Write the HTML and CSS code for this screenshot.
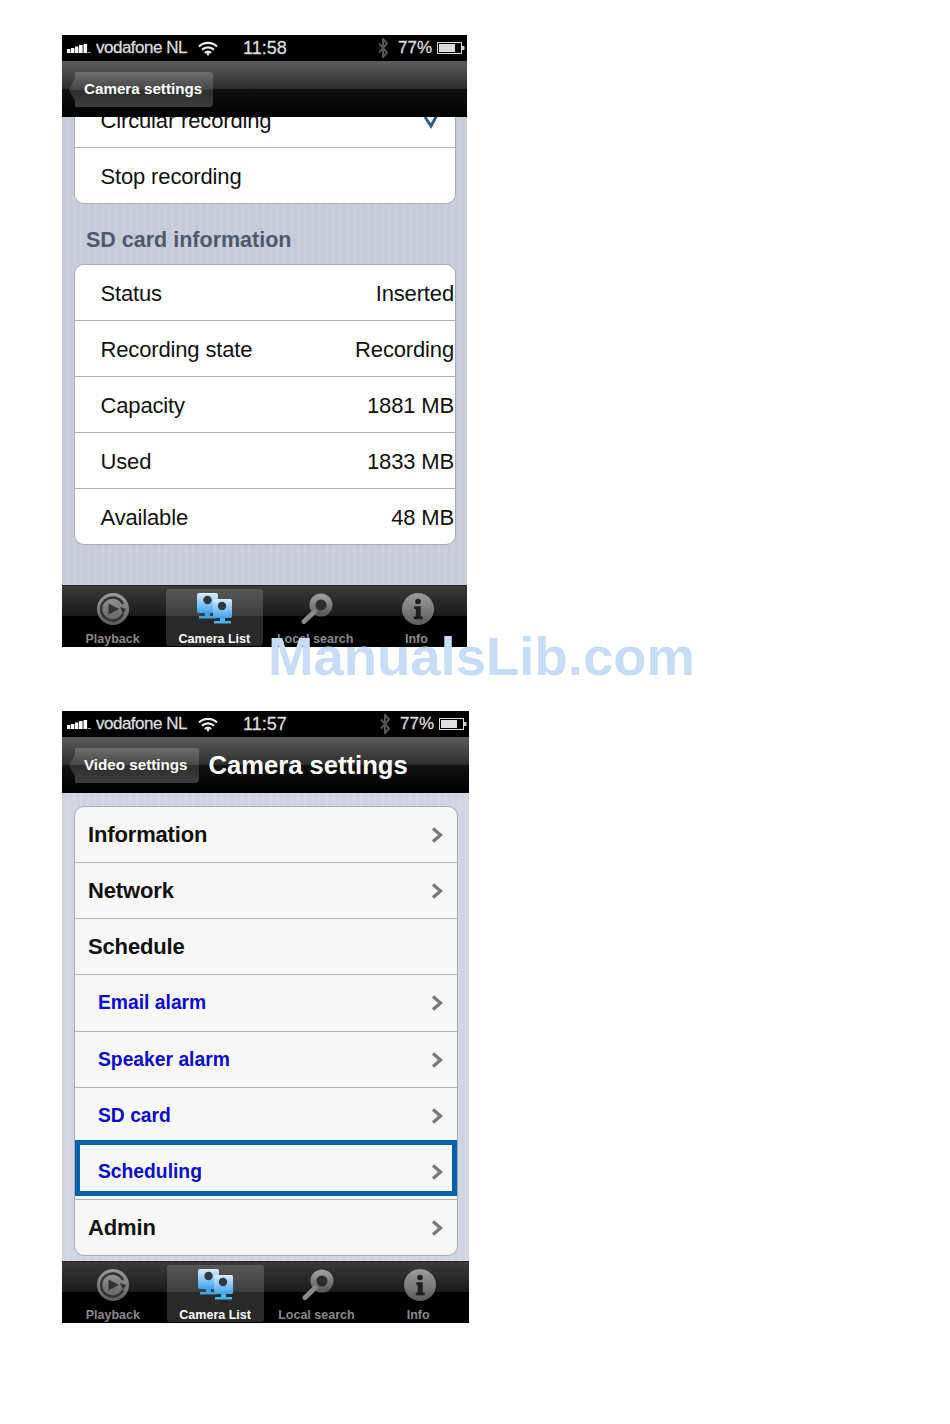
FILE: index.html
```html
<!DOCTYPE html>
<html lang="en">
<head>
  <meta charset="UTF-8" />
  <meta name="viewport" content="width=device-width, initial-scale=1.0" />
  <title>Camera settings</title>
  <link rel="stylesheet" href="styles.css">
</head>
<body>
  <!-- Shared icons -->
  <svg class="icon-defs" width="0" height="0" aria-hidden="true">
    <defs>
      <linearGradient id="greyFill" x1="0" y1="0" x2="0" y2="1">
        <stop offset="0" stop-color="#9c9c9c" />
        <stop offset="1" stop-color="#5c5c5c" />
      </linearGradient>
      <linearGradient id="blueFill" x1="0" y1="0" x2="0" y2="1">
        <stop offset="0" stop-color="#dcecfa" />
        <stop offset="1" stop-color="#3fa4ee" />
      </linearGradient>
    </defs>
    <symbol id="iconSignal" viewBox="0 0 25 10">
      <rect x="0" y="5" width="3.400" height="4" fill="#fff" />
      <rect x="4" y="4" width="3.400" height="5" fill="#fff" />
      <rect x="8" y="2.500" width="3.400" height="6.500" fill="#fff" />
      <rect x="12" y="1" width="3.600" height="8" fill="#fff" />
      <rect x="16.500" y="0" width="3.600" height="9" fill="#fff" />
      <rect x="21" y="8" width="3" height="1" fill="#999" />
    </symbol>
    <symbol id="iconWifi" viewBox="0 0 20 15">
      <path d="M1 5.500a13 13 0 0 1 18 0M4 8.800a8.600 8.600 0 0 1 12 0M7 12a4 4 0 0 1 6 0" fill="none" stroke="#eee" stroke-width="2.200" />
      <path d="M8.400 12.800L10 11.600l1.600 1.200L10 15z" fill="#eee" />
    </symbol>
    <symbol id="iconBluetooth" viewBox="0 0 10 20">
      <path d="M1 5.500l8 9-4 4.500V1l4 4.500-8 9" fill="none" stroke="#555" stroke-width="2" />
    </symbol>
    <symbol id="iconBattery" viewBox="0 0 28 12">
      <rect x="0.500" y="0.500" width="24" height="11" fill="none" stroke="#ddd" />
      <rect x="2" y="2" width="16" height="8" fill="#ddd" />
      <rect x="25" y="4" width="2.500" height="4" fill="#ccc" />
    </symbol>
    <symbol id="iconChevron" viewBox="0 0 12 16">
      <path d="M2 1.500L9.500 8L2 14.500" fill="none" stroke="#777" stroke-width="3.200" />
    </symbol>
    <symbol id="iconCheck" viewBox="0 0 16 16">
      <path d="M2 4l6 9 6-11" fill="none" stroke="#3a5a8c" stroke-width="3" />
    </symbol>
    <symbol id="iconPlayback" viewBox="0 0 32 32">
      <circle cx="16" cy="16" r="16" fill="url(#greyFill)" />
      <path d="M26 21a11.500 11.500 0 1 1 0-10" fill="none" stroke="#333" stroke-width="2.400" />
      <path d="M23 14l6 2-3 5z" fill="#333" />
      <path d="M11.500 10.500L22 16l-10.500 5.500z" fill="#333" />
    </symbol>
    <symbol id="iconCameras" viewBox="0 0 35 32">
      <rect x="0" y="0" width="21" height="20" rx="2" fill="url(#blueFill)" />
      <circle cx="10.500" cy="7" r="4.200" fill="#2d3a46" />
      <path d="M8 20h5v3h6v2.500H2V23h6z" fill="#3fa4ee" />
      <rect x="16" y="6" width="19" height="19" rx="1.500" fill="url(#blueFill)" />
      <circle cx="25" cy="13" r="4.200" fill="#2d3a46" />
      <path d="M23 25h5v3h6v2.500H17V28h6z" fill="#45b8ee" />
    </symbol>
    <symbol id="iconSearch" viewBox="0 0 32 31">
      <circle cx="20" cy="11.500" r="8.500" fill="#2b2b2b" stroke="url(#greyFill)" stroke-width="6" />
      <path d="M13 18.500L3 28" stroke="#8a8a8a" stroke-width="5" stroke-linecap="round" />
    </symbol>
    <symbol id="iconInfo" viewBox="0 0 30 30">
      <circle cx="15" cy="15" r="15" fill="url(#greyFill)" />
      <circle cx="15" cy="8" r="2.600" fill="#1d1d1d" />
      <path d="M11.500 12.500h6v9.500h2v2.500h-8.500V22h2v-7h-1.500z" fill="#1d1d1d" />
    </symbol>
  </svg>

  <!-- SD card screen -->
  <div class="phone phone-sd">
    <div class="status-bar">
      <svg class="signal"><use href="#iconSignal" /></svg>
      <span class="carrier">vodafone NL</span>
      <svg class="wifi"><use href="#iconWifi" /></svg>
      <span class="clock">11:58</span>
      <svg class="bluetooth"><use href="#iconBluetooth" /></svg>
      <span class="percent">77%</span>
      <svg class="battery"><use href="#iconBattery" /></svg>
    </div>
    <div class="nav-bar">
      <span class="back-button">Camera settings</span>
    </div>
    <div class="content">
      <div class="card card-clipped">
        <div class="row">
          <span>Circular recording</span>
          <svg class="check"><use href="#iconCheck" /></svg>
        </div>
        <div class="row"><span>Stop recording</span></div>
      </div>
      <h2 class="section-title">SD card information</h2>
      <div class="card">
        <div class="row"><span>Status</span><span class="value">Inserted</span></div>
        <div class="row"><span>Recording state</span><span class="value">Recording</span></div>
        <div class="row"><span>Capacity</span><span class="value">1881 MB</span></div>
        <div class="row"><span>Used</span><span class="value">1833 MB</span></div>
        <div class="row"><span>Available</span><span class="value">48 MB</span></div>
      </div>
    </div>
    <div class="tab-bar">
      <div class="tab"><svg class="tab-icon"><use href="#iconPlayback" /></svg><span>Playback</span></div>
      <div class="tab active"><svg class="tab-icon cameras"><use href="#iconCameras" /></svg><span>Camera List</span></div>
      <div class="tab"><svg class="tab-icon nudged"><use href="#iconSearch" /></svg><span>Local search</span></div>
      <div class="tab"><svg class="tab-icon nudged"><use href="#iconInfo" /></svg><span>Info</span></div>
    </div>
  </div>

  <!-- Camera settings screen -->
  <div class="phone phone-settings">
    <div class="status-bar">
      <svg class="signal"><use href="#iconSignal" /></svg>
      <span class="carrier">vodafone NL</span>
      <svg class="wifi"><use href="#iconWifi" /></svg>
      <span class="clock">11:57</span>
      <svg class="bluetooth"><use href="#iconBluetooth" /></svg>
      <span class="percent">77%</span>
      <svg class="battery"><use href="#iconBattery" /></svg>
    </div>
    <div class="nav-bar">
      <span class="back-button">Video settings</span>
      <h1 class="nav-title">Camera settings</h1>
    </div>
    <div class="content">
      <div class="card card-menu">
        <div class="row menu-row"><span>Information</span><svg class="chevron"><use href="#iconChevron" /></svg></div>
        <div class="row menu-row"><span>Network</span><svg class="chevron"><use href="#iconChevron" /></svg></div>
        <div class="row menu-row"><span>Schedule</span></div>
        <div class="row menu-row sub-row first-sub"><span>Email alarm</span><svg class="chevron"><use href="#iconChevron" /></svg></div>
        <div class="row menu-row sub-row"><span>Speaker alarm</span><svg class="chevron"><use href="#iconChevron" /></svg></div>
        <div class="row menu-row sub-row"><span>SD card</span><svg class="chevron"><use href="#iconChevron" /></svg></div>
        <div class="row menu-row sub-row marked"><span>Scheduling</span><svg class="chevron"><use href="#iconChevron" /></svg></div>
        <div class="row menu-row"><span>Admin</span><svg class="chevron"><use href="#iconChevron" /></svg></div>
      </div>
    </div>
    <div class="tab-bar">
      <div class="tab"><svg class="tab-icon"><use href="#iconPlayback" /></svg><span>Playback</span></div>
      <div class="tab active"><svg class="tab-icon cameras"><use href="#iconCameras" /></svg><span>Camera List</span></div>
      <div class="tab"><svg class="tab-icon nudged"><use href="#iconSearch" /></svg><span>Local search</span></div>
      <div class="tab"><svg class="tab-icon nudged"><use href="#iconInfo" /></svg><span>Info</span></div>
    </div>
  </div>

  <div class="watermark">ManualsLib.com</div>
</body>
</html>
```

FILE: styles.css
```css
body {
  margin: 0;
  padding: 35px 0 0 62px;
  min-height: 1389px;
  position: relative;
  background: #fff;
  font-family: 'Liberation Sans', Arial, sans-serif;
  color: #111;
}
.icon-defs {
  display: block;
  height: 0;
}
.phone {
  display: flex;
  flex-direction: column;
  height: 612px;
  overflow: hidden;
}
.phone-sd {
  width: 405px;
}
.phone-settings {
  width: 407px;
  margin-top: 64px;
}

/* Status bar */
.status-bar {
  display: flex;
  align-items: center;
  height: 26px;
  flex-shrink: 0;
  padding: 0 2px 0 5px;
  background: #000;
  color: #ddd;
  font-size: 17px;
  letter-spacing: -0.5px;
  -webkit-text-stroke: 0.3px #ddd;
}
.signal {
  width: 25px;
  height: 10px;
  margin-top: 2px;
}
.carrier {
  margin-left: 4px;
  width: 102px;
  white-space: nowrap;
}
.wifi {
  width: 20px;
  height: 15px;
}
.clock {
  margin-left: 25px;
  font-size: 18px;
  letter-spacing: 0;
}
.bluetooth {
  width: 10px;
  height: 20px;
  margin-left: auto;
}
.percent {
  margin-left: 10px;
  letter-spacing: 0;
}
.battery {
  width: 28px;
  height: 12px;
  margin-left: 5px;
}

/* Nav bar */
.nav-bar {
  display: flex;
  align-items: center;
  flex-shrink: 0;
  height: 56px;
  padding-left: 13px;
  background: linear-gradient(#5c5c5c, #2e2e2e 49%, #111 50%, #000);
  position: relative;
  z-index: 1;
}
.back-button {
  position: relative;
  display: flex;
  align-items: center;
  height: 33px;
  padding: 0 11px 2px 9px;
  border-radius: 0 4px 4px 0;
  background: linear-gradient(#6e6e6e, #454545 50%, #2e2e2e 50%, #3c3c3c);
  color: #fff;
  font-size: 15.200px;
  font-weight: bold;
  white-space: nowrap;
}
.back-button::before {
  content: "";
  position: absolute;
  left: -9px;
  top: 5px;
  z-index: -1;
  width: 25px;
  height: 25px;
  transform: scaleX(0.55) rotate(45deg);
  border-radius: 3px;
  background: linear-gradient(135deg, #6e6e6e, #454545 50%, #2e2e2e 50%, #3c3c3c);
}
.nav-title {
  margin: 0 0 0 10px;
  color: #fff;
  font-size: 25.600px;
  font-weight: bold;
  white-space: nowrap;
}

/* Content */
.content {
  flex: 1;
  min-height: 0;
  overflow: hidden;
  padding: 0 11px 0 12px;
  background: repeating-linear-gradient(90deg, #c7cbd8 0, #c7cbd8 4px, #cbcfdb 4px, #cbcfdb 7px);
}
.phone-settings .content {
  background: repeating-linear-gradient(90deg, #d0d4df 0, #d0d4df 4px, #d4d8e3 4px, #d4d8e3 7px);
}
.card {
  overflow: hidden;
  background: #fff;
  border: 1px solid #a8abb3;
  border-radius: 10px;
}
.card-clipped {
  margin-top: -26px;
}
.card-menu {
  margin-top: 13px;
  background: #f7f7f7;
}
.row {
  position: relative;
  display: flex;
  align-items: center;
  justify-content: space-between;
  height: 55px;
  padding: 0 1px 0 25.500px;
  border-bottom: 1px solid #b4b4b4;
  font-size: 22px;
  letter-spacing: -0.15px;
  white-space: nowrap;
}
.phone-sd .row {
  height: 53px;
  padding-top: 2px;
}
.row:last-child {
  border-bottom: 0;
}
.check {
  width: 16px;
  height: 16px;
  margin-right: 15px;
}
.section-title {
  margin: 23px 0 11px 12px;
  font-size: 21.500px;
  line-height: 26px;
  font-weight: bold;
  color: #4f586e;
}

/* Settings menu */
.menu-row {
  padding: 0 14px 0 13px;
  font-weight: bold;
}
.sub-row {
  padding-left: 23px;
  font-size: 19.300px;
  letter-spacing: 0;
  color: #0b0bd0;
}
.first-sub {
  height: 56px;
}
.chevron {
  width: 12px;
  height: 16px;
}
.marked::after {
  content: "";
  position: absolute;
  left: 0;
  right: 0;
  top: -4px;
  height: 46px;
  border: 5px solid #0060a8;
}

/* Tab bar */
.tab-bar {
  display: grid;
  grid-template-columns: repeat(4, 1fr);
  flex-shrink: 0;
  height: 62px;
  background: linear-gradient(#3a3a3a, #1a1a1a 49%, #000 50%);
  border-top: 1px solid #222;
  box-sizing: border-box;
}
.tab {
  display: flex;
  flex-direction: column;
  align-items: center;
  padding-top: 7px;
  color: #8a8a8a;
  font-size: 12.500px;
  font-weight: bold;
  white-space: nowrap;
}
.tab span {
  margin-top: 7px;
}
.tab.active {
  margin: 3px 2px 2px 3px;
  padding-top: 4px;
  border-radius: 3px;
  background: rgba(255, 255, 255, 0.16);
  color: #fff;
}
.tab-icon {
  width: 32px;
  height: 32px;
}
.tab-icon.cameras {
  width: 35px;
}
.tab-icon.nudged {
  margin-left: 3px;
}

/* Site watermark sits over the first screen */
.watermark {
  position: absolute;
  left: 268px;
  top: 627px;
  color: #c8dcf5;
  font-size: 54.500px;
  line-height: 60px;
  font-weight: bold;
  white-space: nowrap;
}
```
